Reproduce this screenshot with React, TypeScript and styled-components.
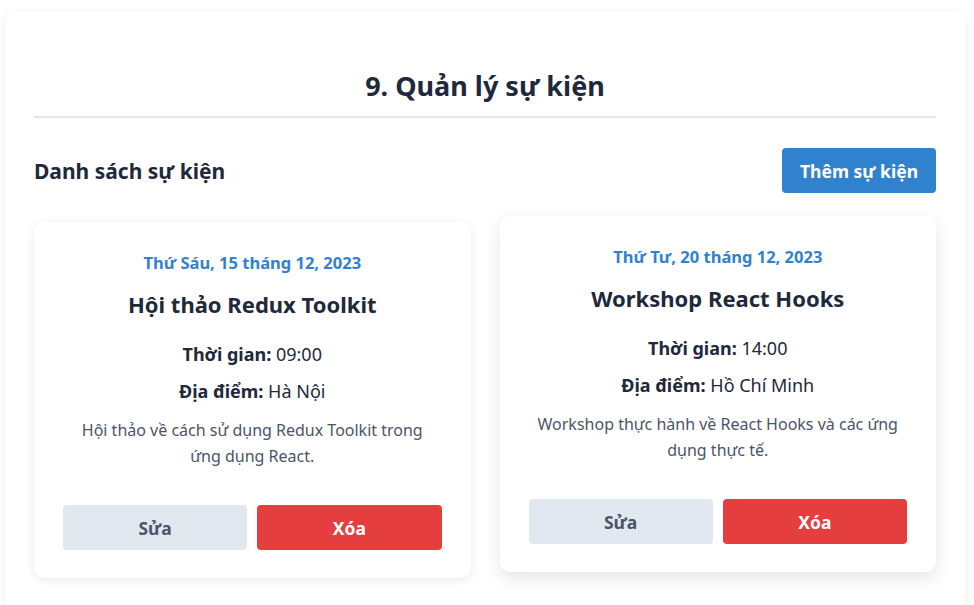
import React from "react";
import styled, { createGlobalStyle } from "styled-components";

const GlobalStyle = createGlobalStyle`
  * { box-sizing: border-box; }
  html, body { margin: 0; padding: 0; background: #ffffff; }
  body { font-family: "Noto Sans", "Open Sans", sans-serif; color: #1e293b; }
`;

const Page = styled.div`
  padding: 12px 0 0 5px;
`;

const Panel = styled.section`
  width: 960px;
  background: #ffffff;
  border-radius: 10px;
  box-shadow: 0 2px 12px rgba(0, 0, 0, 0.07);
  padding: 0 29px 30px;
`;

const Title = styled.h1`
  margin: 0;
  padding: 57px 0 13px;
  font-size: 27px;
  line-height: 34px;
  font-weight: 700;
  text-align: center;
  color: #1e293b;
  border-bottom: 2px solid #e2e8f0;
`;

const Toolbar = styled.div`
  margin-top: 30px;
  display: flex;
  align-items: center;
  justify-content: space-between;
  height: 45px;
`;

const SectionTitle = styled.h2`
  margin: 0;
  font-size: 21px;
  font-weight: 700;
  color: #1e293b;
`;

const PrimaryButton = styled.button`
  height: 45px;
  width: 154px;
  padding: 0;
  border: none;
  border-radius: 4px;
  background: #3182ce;
  color: #ffffff;
  font-family: inherit;
  font-size: 17.5px;
  font-weight: 700;
  cursor: pointer;
`;

const Grid = styled.div`
  margin-top: 29px;
  display: grid;
  grid-template-columns: 1fr 1fr;
  gap: 29px;
  align-items: start;
`;

const Card = styled.article<{ $raised?: boolean }>`
  background: #ffffff;
  border-radius: 10px;
  padding: 30px 29px 28px;
  text-align: center;
  box-shadow: ${(p) =>
    p.$raised ? "0 6px 18px rgba(0, 0, 0, 0.11)" : "0 2px 10px rgba(0, 0, 0, 0.09)"};
  transform: ${(p) => (p.$raised ? "translateY(-6px)" : "none")};
`;

const DateText = styled.div`
  font-size: 16.5px;
  line-height: 22px;
  font-weight: 700;
  color: #3182ce;
`;

const CardTitle = styled.h3`
  margin: 16px 0 0;
  font-size: 22px;
  line-height: 28px;
  font-weight: 700;
  color: #1e293b;
`;

const Info = styled.p<{ $first?: boolean }>`
  margin: ${(p) => (p.$first ? "23px" : "10px")} 0 0;
  font-size: 18px;
  line-height: 27px;
  color: #1e293b;
  strong { font-weight: 700; }
`;

const Description = styled.p`
  margin: 12px 0 0;
  padding: 0 5px;
  font-size: 16px;
  line-height: 26px;
  color: #4a5568;
`;

const Actions = styled.div`
  margin-top: 36px;
  display: grid;
  grid-template-columns: 1fr 1fr;
  gap: 10px;
`;

const ActionButton = styled.button<{ $variant: "edit" | "delete" }>`
  height: 45px;
  border: none;
  border-radius: 4px;
  font-family: inherit;
  font-size: 17.5px;
  font-weight: 700;
  cursor: pointer;
  background: ${(p) => (p.$variant === "edit" ? "#e2e8f0" : "#e53e3e")};
  color: ${(p) => (p.$variant === "edit" ? "#4a5568" : "#ffffff")};
`;

type EventItem = {
  date: string;
  title: string;
  time: string;
  place: string;
  desc: string;
  raised?: boolean;
};

const events: EventItem[] = [
  {
    date: "Thứ Sáu, 15 tháng 12, 2023",
    title: "Hội thảo Redux Toolkit",
    time: "09:00",
    place: "Hà Nội",
    desc: "Hội thảo về cách sử dụng Redux Toolkit trong ứng dụng React.",
  },
  {
    date: "Thứ Tư, 20 tháng 12, 2023",
    title: "Workshop React Hooks",
    time: "14:00",
    place: "Hồ Chí Minh",
    desc: "Workshop thực hành về React Hooks và các ứng dụng thực tế.",
    raised: true,
  },
];

export default function App() {
  return (
    <Page>
      <GlobalStyle />
      <Panel>
        <Title>9. Quản lý sự kiện</Title>
        <Toolbar>
          <SectionTitle>Danh sách sự kiện</SectionTitle>
          <PrimaryButton>Thêm sự kiện</PrimaryButton>
        </Toolbar>
        <Grid>
          {events.map((e) => (
            <Card key={e.title} $raised={e.raised}>
              <DateText>{e.date}</DateText>
              <CardTitle>{e.title}</CardTitle>
              <Info $first>
                <strong>Thời gian:</strong> {e.time}
              </Info>
              <Info>
                <strong>Địa điểm:</strong> {e.place}
              </Info>
              <Description>{e.desc}</Description>
              <Actions>
                <ActionButton $variant="edit">Sửa</ActionButton>
                <ActionButton $variant="delete">Xóa</ActionButton>
              </Actions>
            </Card>
          ))}
        </Grid>
      </Panel>
    </Page>
  );
}
